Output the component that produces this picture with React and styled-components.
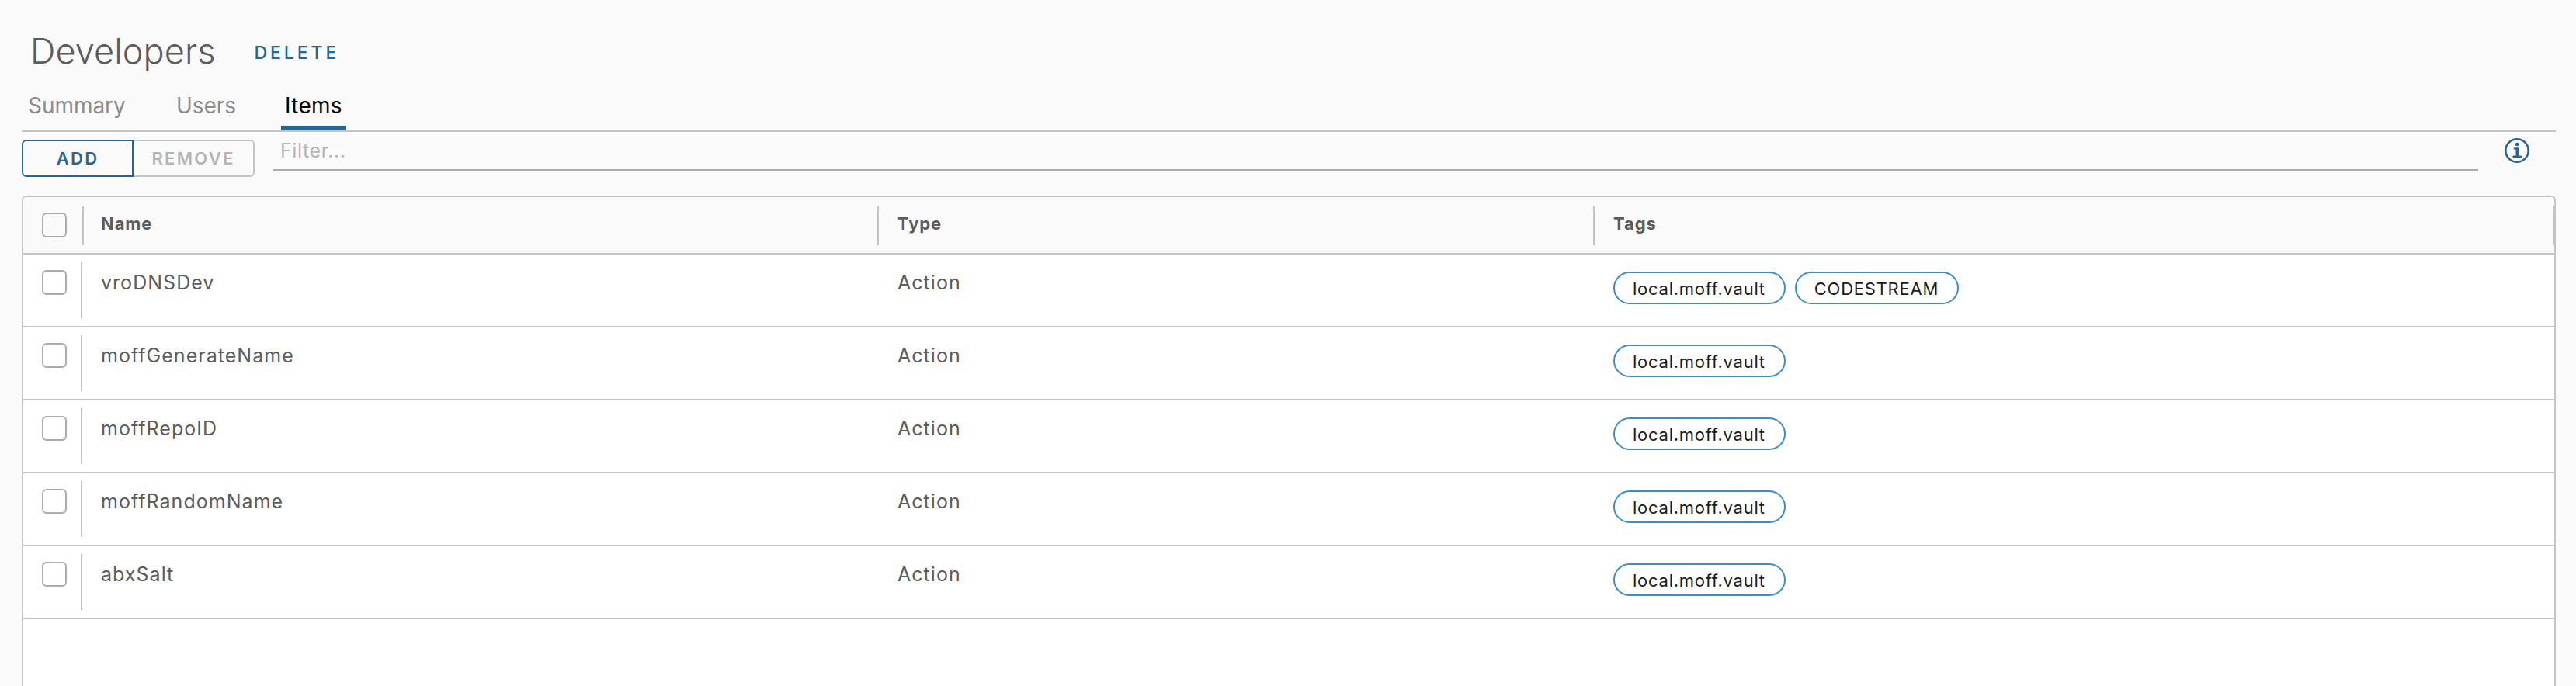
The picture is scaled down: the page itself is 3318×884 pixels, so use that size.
import React from "react";
import styled, { createGlobalStyle, ThemeProvider } from "styled-components";

const theme = {
  page: "#fafafa",
  line: "#c4c4c4",
  control: "#ababab",
  text: "#5c5c5c",
  muted: "#8c8c8c",
  disabled: "#b5b5b5",
  link: "#236698",
  pill: "#368dcc",
};

const GlobalStyle = createGlobalStyle`
  *, *::before, *::after { box-sizing: border-box; }
  html, body { margin: 0; }
  body {
    background: ${theme.page};
    color: ${theme.text};
    font-family: Inter, "Liberation Sans", sans-serif;
    overflow: hidden;
  }
`;

const Page = styled.main`
  display: flex;
  flex-direction: column;
  height: 884px;
  padding: 0 26px 0 28px;
  overflow: hidden;
`;

const Header = styled.header`
  display: flex;
  align-items: flex-start;
  gap: 50px;
  height: 104px;
  padding: 36px 0 0 11px;
`;

const Title = styled.h1`
  margin: 0;
  font-size: 45px;
  font-weight: 320;
  line-height: 60px;
  letter-spacing: 0.1px;
`;

const LinkButton = styled.button`
  margin: 20px 0 0;
  padding: 0;
  border: 0;
  background: none;
  color: ${({ theme }) => theme.link};
  font: 550 23px/24px Inter, sans-serif;
  letter-spacing: 3.9px;
`;

const Tabs = styled.nav`
  display: flex;
  gap: 48px;
  height: 66px;
  border-bottom: 2px solid ${({ theme }) => theme.line};
`;

const Tab = styled.a`
  width: ${({ $width }) => $width}px;
  height: 64px;
  padding: 14px 0 0 ${({ $inset = 5 }) => $inset}px;
  border-bottom: 6px solid ${({ $active, theme }) => ($active ? theme.link : "transparent")};
  color: ${({ $active, theme }) => ($active ? "#000" : theme.muted)};
  font-size: 28px;
  line-height: 36px;
  letter-spacing: ${({ $active }) => ($active ? 0.3 : -0.05)}px;
`;

const Toolbar = styled.div`
  display: flex;
  align-items: flex-start;
  flex: none;
  height: 82px;
`;

const ButtonGroup = styled.div`
  display: flex;
  margin: 10px 24px 0 0;
`;

const GroupButton = styled.button`
  width: ${({ $width }) => $width}px;
  height: 48px;
  padding: 0;
  border: 2px solid ${({ theme }) => theme.link};
  border-radius: 6px 0 0 6px;
  background: transparent;
  color: ${({ theme }) => theme.link};
  font: 600 22px/24px Inter, sans-serif;
  letter-spacing: 2.3px;

  &:disabled {
    border-color: ${({ theme }) => theme.line};
    border-left: 0;
    border-radius: 0 6px 6px 0;
    color: ${({ theme }) => theme.disabled};
  }
`;

const FilterInput = styled.input`
  flex: 1;
  height: 50px;
  padding: 6px 9px 6px;
  border: 0;
  border-bottom: 2px solid ${({ theme }) => theme.control};
  border-radius: 0;
  outline: 0;
  background: transparent;
  font: 400 25px/36px Inter, sans-serif;
  letter-spacing: 0.6px;

  &::placeholder {
    color: ${({ theme }) => theme.disabled};
    opacity: 1;
  }
`;

const InfoIcon = styled.svg`
  width: 32px;
  height: 32px;
  margin: 8px 34px 0;
  color: ${({ theme }) => theme.link};
`;

const Grid = styled.section`
  display: flex;
  flex: 1;
  flex-direction: column;
  border: 2px solid ${({ theme }) => theme.line};
  border-bottom: 0;
  border-radius: 6px 6px 0 0;
  background: #fff;
`;

const GridRow = styled.div`
  display: grid;
  flex: none;
  grid-template-columns: 76px 1024px 922px 1fr;
  height: 94px;
  border-bottom: 2px solid ${({ theme }) => theme.line};
`;

const GridHead = styled(GridRow)`
  height: 74px;
  border-radius: 4px 4px 0 0;
  background: ${({ theme }) => theme.page};
`;

const Separator = styled.span`
  flex: none;
  width: 2px;
  height: ${({ $tall }) => ($tall ? 72 : 50)}px;
  margin-top: ${({ $tall }) => ($tall ? 10 : 12)}px;
  background: ${({ theme }) => theme.line};
`;

const SelectCell = styled.div`
  display: flex;
  justify-content: space-between;
  padding-left: 24px;
`;

const Checkbox = styled.input.attrs({ type: "checkbox" })`
  appearance: none;
  width: 32px;
  height: 32px;
  margin: 20px 0 0;
  border: 2px solid ${({ theme }) => theme.control};
  border-radius: 6px;
`;

const HeadCell = styled.div`
  display: flex;
`;

const HeadLabel = styled.span`
  flex: 1;
  padding: 19px 0 0 ${({ $inset = 24 }) => $inset}px;
  font-size: 22px;
  font-weight: 650;
  line-height: 30px;
  letter-spacing: 0.9px;
`;

const Cell = styled.div`
  padding: 18px 0 0 ${({ $inset = 24 }) => $inset}px;
  font-size: 25px;
  font-weight: 380;
  line-height: 36px;
  letter-spacing: 1.03px;
`;

const TagCell = styled.div`
  display: flex;
  align-items: flex-start;
  gap: 12px;
  padding: 22px 0 0 26px;
`;

const Tag = styled.span`
  height: 42px;
  padding: 1px 24px 0 23px;
  border: 2px solid ${({ theme }) => theme.pill};
  border-radius: 21px;
  color: #1b1b1b;
  font-size: 22px;
  line-height: 38px;
  letter-spacing: 0.75px;
`;

const columns = [
  { label: "Name", inset: 22 },
  { label: "Type", inset: 24 },
  { label: "Tags", inset: 24 },
];

const items = [
  { name: "vroDNSDev", type: "Action", tags: ["local.moff.vault", "CODESTREAM"] },
  { name: "moffGenerateName", type: "Action", tags: ["local.moff.vault"] },
  { name: "moffRepoID", type: "Action", tags: ["local.moff.vault"] },
  { name: "moffRandomName", type: "Action", tags: ["local.moff.vault"] },
  { name: "abxSalt", type: "Action", tags: ["local.moff.vault"] },
];

export default function App() {
  return (
    <ThemeProvider theme={theme}>
      <GlobalStyle />
      <Page>
        <Header>
          <Title>Developers</Title>
          <LinkButton>DELETE</LinkButton>
        </Header>
        <Tabs>
          <Tab $width={145} $inset={8}>Summary</Tab>
          <Tab $width={93} $inset={6}>Users</Tab>
          <Tab $width={84} $active>Items</Tab>
        </Tabs>
        <Toolbar>
          <ButtonGroup>
            <GroupButton $width={144}>ADD</GroupButton>
            <GroupButton $width={156} disabled>REMOVE</GroupButton>
          </ButtonGroup>
          <FilterInput placeholder="Filter..." />
          <InfoIcon viewBox="0 0 32 32" fill="currentColor">
            <circle cx="16" cy="16" r="14.7" fill="none" stroke="currentColor" strokeWidth="2.6" />
            <circle cx="16.1" cy="8" r="2.3" />
            <path d="M13 12.2h5v10.4h2.8a1.3 1.3 0 0 1 0 2.6h-9.2a1.3 1.3 0 0 1 0-2.6h2.9v-7.8H13a1.3 1.3 0 0 1 0-2.6z" />
          </InfoIcon>
        </Toolbar>
        <Grid>
          <GridHead>
            <SelectCell>
              <Checkbox />
            </SelectCell>
            {columns.map(({ label, inset }, i) => (
              <HeadCell key={label}>
                <Separator />
                <HeadLabel $inset={inset}>{label}</HeadLabel>
                {i === columns.length - 1 && <Separator />}
              </HeadCell>
            ))}
          </GridHead>
          {items.map((item) => (
            <GridRow key={item.name}>
              <SelectCell>
                <Checkbox />
                <Separator $tall />
              </SelectCell>
              <Cell>{item.name}</Cell>
              <Cell $inset={26}>{item.type}</Cell>
              <TagCell>
                {item.tags.map((tag) => (
                  <Tag key={tag}>{tag}</Tag>
                ))}
              </TagCell>
            </GridRow>
          ))}
        </Grid>
      </Page>
    </ThemeProvider>
  );
}
